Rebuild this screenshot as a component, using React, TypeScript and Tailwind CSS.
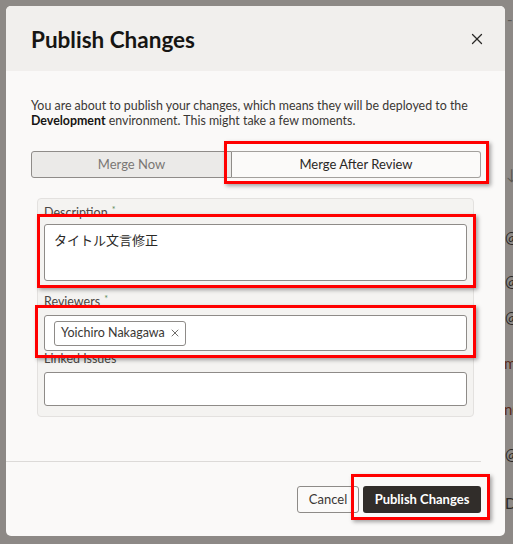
import { X } from "lucide-react";

const font = { fontFamily: "Lato, 'Noto Sans CJK JP', sans-serif" };

function Mark({ className }: { className: string }) {
  return (
    <div
      className={`absolute border-[3px] border-[#ff0000] shadow-[2px_2px_4px_rgba(0,0,0,0.35)] pointer-events-none ${className}`}
    />
  );
}

function Label({ text, required }: { text: string; required?: boolean }) {
  return (
    <div className="text-[12.5px] leading-[15px] text-[#4a4744] flex">
      {text}
      {required && <span className="ml-[4px] text-[9px] leading-[9px] text-[#5a8a5a]">*</span>}
    </div>
  );
}

export default function App() {
  return (
    <div className="relative w-[513px] h-[544px] bg-[#8d8986] overflow-hidden" style={font}>
      {/* page behind overlay */}
      <div className="absolute left-[503px] top-0 w-[20px] h-full text-[#2c2a28] text-[15px]">
        <div className="absolute top-[8px] left-[4px] text-[#5c5955]">-</div>
        <div className="absolute top-[163px] left-[3px] text-[#5c5955]">↓</div>
        <div className="absolute top-[226px] left-[2px]">@</div>
        <div className="absolute top-[270px] left-[2px]">@</div>
        <div className="absolute top-[306px] left-[2px]">@</div>
        <div className="absolute top-[352px] left-[1px] text-[#5a2a1a]">m</div>
        <div className="absolute top-[398px] left-[1px] text-[#5a2a1a]">n(</div>
        <div className="absolute top-[443px] left-[2px]">@</div>
        <div className="absolute top-[492px] left-[2px]">D</div>
      </div>

      <div className="absolute left-[6px] top-[6px] w-[499px] h-[530px] rounded-[5px] bg-[#faf9f8] overflow-hidden flex flex-col">
        <div className="h-[65px] bg-[#f1efed] flex items-center justify-between pl-[25px] pr-[19px]">
          <h1 className="text-[22.5px] font-bold text-[#161513] leading-none pt-[3px]">Publish Changes</h1>
          <X size={18} strokeWidth={1.7} className="text-[#2a2826]" />
        </div>

        <div className="px-[25px] pt-[27px]">
          <p className="text-[12.4px] leading-[15px] text-[#3a3734]">
            You are about to publish your changes, which means they will be deployed to the{" "}
            <span className="font-bold text-[#161513]">Development</span> environment. This might take a few moments.
          </p>

          <div className="mt-[23px] flex h-[27px] w-[450px] text-[13px]">
            <div className="w-[201px] flex items-center justify-center bg-[#ebeae8] border border-[#8f8c89] rounded-l-[3px] text-[#7a7774]">
              Merge Now
            </div>
            <div className="flex-1 flex items-center justify-center bg-[#fbfaf9] border border-l-0 border-[#a3a09d] rounded-r-[3px] text-[#2a2826]">
              Merge After Review
            </div>
          </div>

          <div className="mt-[20px] ml-[6px] w-[437px] h-[219px] bg-[#f4f3f1] border border-[#e3e1df] rounded-[4px] px-[6px] pt-[6px]">
            <Label text="Description" required />
            <div className="mt-[4px] h-[57px] bg-white border border-[#8e8b88] rounded-[3px] px-[9px] pt-[6px] text-[13px] text-[#2a2826]">
              タイトル文言修正
            </div>
            <div className="mt-[13px]">
              <Label text="Reviewers" required />
            </div>
            <div className="mt-[6px] h-[36px] bg-white border border-[#8e8b88] rounded-[3px] px-[9px] flex items-center">
              <div className="h-[25px] flex items-center gap-[4px] border border-[#8e8b88] rounded-[3px] pl-[6px] pr-[4px] text-[12.5px] text-[#3a3734]">
                Yoichiro Nakagawa
                <X size={12} strokeWidth={1.6} className="text-[#4a4744]" />
              </div>
            </div>
            <Label text="Linked Issues" />
            <div className="mt-[6px] h-[34px] bg-white border border-[#8e8b88] rounded-[3px]" />
          </div>
        </div>

        <div className="mt-[44px] w-[475px] border-t border-[#dcdad8]" />

        <div className="mt-[24px] flex justify-end gap-[4px] pr-[24px]">
          <button className="h-[27px] w-[62px] border border-[#8e8b88] rounded-[3px] bg-[#fbfaf9] text-[13px] text-[#3a3734]">
            Cancel
          </button>
          <button className="h-[27px] w-[118px] rounded-[3px] bg-[#312d2a] text-[13px] font-bold text-white">
            Publish Changes
          </button>
        </div>
      </div>

      <Mark className="left-[224px] top-[141px] w-[265px] h-[43px]" />
      <Mark className="left-[37px] top-[214px] w-[439px] h-[74px]" />
      <Mark className="left-[35px] top-[305px] w-[441px] h-[53px]" />
      <Mark className="left-[351px] top-[474px] w-[139px] h-[46px]" />
    </div>
  );
}
